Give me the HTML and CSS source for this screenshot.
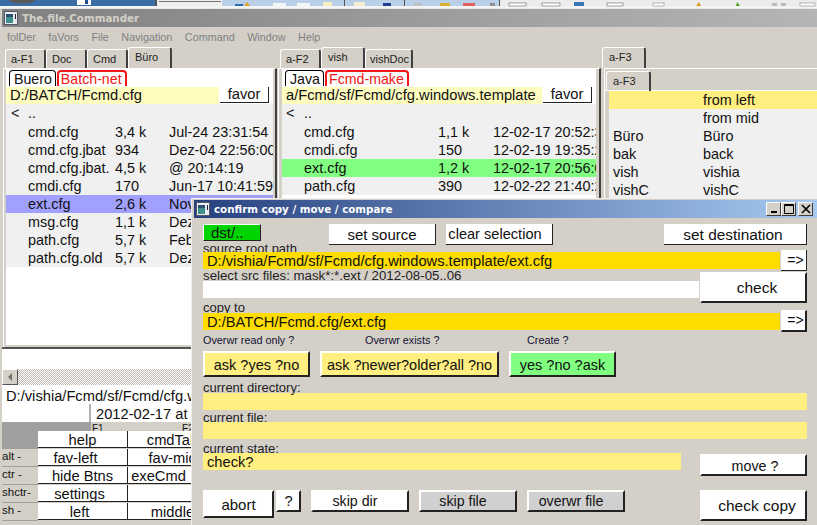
FILE: index.html
```html
<!DOCTYPE html>
<html lang="en">
<head>
    <meta charset="UTF-8">
    <title>The.file.Commander</title>
    <link rel="stylesheet" href="styles.css">
</head>
<body>
    <!-- what is left of the desktop toolbar above the window -->
    <svg class="desktop-strip" width="817" height="8" viewBox="0 0 817 8">
        <rect width="817" height="8" fill="#f4f4f4"/>
        <rect width="155" height="6" fill="#3a6ea5"/>
        <ellipse cx="22" cy="0" rx="13" ry="3.5" fill="#5a5a5a"/>
        <rect x="77" width="14" height="5" fill="#fff"/>
        <rect x="85" width="3" height="4" fill="#1f4f8f"/>
        <rect x="155" width="2" height="6" fill="#555"/>
        <rect x="157" width="65" height="6" fill="#eeeeee"/>
        <rect x="159" y="1" width="62" height="1" fill="#777"/>
        <rect x="222" width="278" height="6" fill="#b9d0e8"/>
        <rect x="235" y="4" width="8" height="2" fill="#2a6db0"/>
        <path d="M244 6l3-4 3 4z" fill="#e8a020"/>
        <rect x="273" y="3" width="13" height="3" fill="#f4f4f4"/>
        <rect x="297" y="3" width="13" height="3" fill="#f4f4f4"/>
        <rect x="323" y="2" width="9" height="4" fill="#f8f0c0"/>
        <rect x="344" width="1" height="6" fill="#555"/>
        <rect x="354" y="2" width="11" height="4" fill="#f4f0d0"/>
        <rect x="383" y="3" width="8" height="3" fill="#1f3f8f"/>
        <rect x="404" width="1" height="6" fill="#555"/>
        <rect x="414" y="3" width="8" height="3" fill="#c0c0c0"/>
        <rect x="440" y="3" width="10" height="3" fill="#d8b030"/>
        <rect x="463" y="3" width="12" height="3" fill="#e06060"/>
        <rect x="490" y="3" width="5" height="3" fill="#909090"/>
        <rect x="499" width="1" height="6" fill="#555"/>
        <rect x="500" width="317" height="6" fill="#ececec"/>
        <rect x="509" y="3" width="17" height="3" fill="#fff" stroke="#666" stroke-width="0.6"/>
        <rect x="542" y="3" width="18" height="3" fill="#fff" stroke="#666" stroke-width="0.6"/>
        <rect x="574" y="2" width="10" height="4" fill="#3a78b8"/>
        <rect x="607" y="3" width="16" height="3" fill="#fff" stroke="#666" stroke-width="0.6"/>
        <rect x="653" y="3" width="11" height="3" fill="#fff" stroke="#888" stroke-width="0.6"/>
        <path d="M696 6l3-4 2 4z" fill="#d0a020"/>
        <path d="M736 6l1-4 3 4z" fill="#50a030"/>
        <rect x="772" y="3" width="5" height="3" fill="#bbb"/>
        <rect x="781" y="3" width="5" height="3" fill="#bbb"/>
        <rect x="800" y="3" width="15" height="3" fill="#fff" stroke="#888" stroke-width="0.6"/>
    </svg>

    <div class="main-window">
        <div class="main-title">
            <svg class="app-icon" width="14" height="14" viewBox="0 0 14 14"><rect x="0.5" y="0.5" width="13" height="13" fill="#e8eef0" stroke="#556"/><rect x="2" y="3" width="7" height="9" fill="#3f8f8f"/><rect x="2" y="3" width="7" height="3" fill="#2a4f6f"/><rect x="11" y="3" width="1" height="5" fill="#223"/></svg>
            <span>The.file.Commander</span>
        </div>
        <div class="menu">
            <span>folDer</span><span>faVors</span><span>File</span><span>Navigation</span><span>Command</span><span>Window</span><span>Help</span>
        </div>

        <div class="panels">
            <div class="panel panel-left">
                <div class="tabs">
                    <span class="tab">a-F1</span><span class="tab">Doc</span><span class="tab">Cmd</span><span class="tab active">Büro</span>
                </div>
                <div class="tab-body">
                    <div class="subtabs"><span class="subtab">Buero</span><span class="subtab red">Batch-net</span></div>
                    <div class="pathline"><span class="path">D:/BATCH/Fcmd.cfg</span><span class="favor">favor</span></div>
                    <div class="filelist">
                        <div class="row"><span class="c0">&lt;</span><span class="c1">..</span></div>
                        <div class="row"><span class="c0"></span><span class="c1">cmd.cfg</span><span class="c2">3,4 k</span><span class="c3">Jul-24 23:31:54</span></div>
                        <div class="row"><span class="c0"></span><span class="c1">cmd.cfg.jbat</span><span class="c2">934</span><span class="c3">Dez-04 22:56:00</span></div>
                        <div class="row"><span class="c0"></span><span class="c1">cmd.cfg.jbat.</span><span class="c2">4,5 k</span><span class="c3">@ 20:14:19</span></div>
                        <div class="row"><span class="c0"></span><span class="c1">cmdi.cfg</span><span class="c2">170</span><span class="c3">Jun-17 10:41:59</span></div>
                        <div class="row sel-blue"><span class="c0"></span><span class="c1">ext.cfg</span><span class="c2">2,6 k</span><span class="c3">Nov</span></div>
                        <div class="row"><span class="c0"></span><span class="c1">msg.cfg</span><span class="c2">1,1 k</span><span class="c3">Dez</span></div>
                        <div class="row"><span class="c0"></span><span class="c1">path.cfg</span><span class="c2">5,7 k</span><span class="c3">Feb</span></div>
                        <div class="row"><span class="c0"></span><span class="c1">path.cfg.old</span><span class="c2">5,7 k</span><span class="c3">Dez</span></div>
                    </div>
                </div>
            </div>

            <div class="panel panel-mid">
                <div class="tabs">
                    <span class="tab">a-F2</span><span class="tab active">vish</span><span class="tab">vishDoc</span>
                </div>
                <div class="tab-body">
                    <div class="subtabs"><span class="subtab">Java</span><span class="subtab red">Fcmd-make</span></div>
                    <div class="pathline"><span class="path">a/Fcmd/sf/Fcmd/cfg.windows.template</span><span class="favor">favor</span></div>
                    <div class="filelist">
                        <div class="row"><span class="c0">&lt;</span><span class="c1">..</span></div>
                        <div class="row"><span class="c0"></span><span class="c1">cmd.cfg</span><span class="c2">1,1 k</span><span class="c3">12-02-17 20:52:30</span></div>
                        <div class="row"><span class="c0"></span><span class="c1">cmdi.cfg</span><span class="c2">150</span><span class="c3">12-02-19 19:35:20</span></div>
                        <div class="row sel-green"><span class="c0"></span><span class="c1">ext.cfg</span><span class="c2">1,2 k</span><span class="c3">12-02-17 20:56:00</span></div>
                        <div class="row"><span class="c0"></span><span class="c1">path.cfg</span><span class="c2">390</span><span class="c3">12-02-22 21:40:20</span></div>
                    </div>
                </div>
            </div>

            <div class="panel panel-right">
                <div class="tabs">
                    <span class="tab active">a-F3</span>
                </div>
                <div class="tab-body">
                    <div class="tabs inner-tabs"><span class="tab active">a-F3</span></div>
                    <div class="favlist">
                        <div class="favrow sel-yellow"><span class="f1"></span><span>from left</span></div>
                        <div class="favrow"><span class="f1"></span><span>from mid</span></div>
                        <div class="favrow"><span class="f1">Büro</span><span>Büro</span></div>
                        <div class="favrow"><span class="f1">bak</span><span>back</span></div>
                        <div class="favrow"><span class="f1">vish</span><span>vishia</span></div>
                        <div class="favrow"><span class="f1">vishC</span><span>vishC</span></div>
                    </div>
                </div>
            </div>
        </div>

        <div class="lower-left">
            <div class="blank-line"></div>
            <div class="scrollbar">
                <span class="scroll-btn"><svg width="6" height="8" viewBox="0 0 6 8"><path d="M5 0v8L1 4z" fill="#707070"/></svg></span>
            </div>
            <div class="cmdline">D:/vishia/Fcmd/sf/Fcmd/cfg.windows.template/ext.cfg</div>
            <div class="dateline"><span class="date-blank"></span><span class="date-text">2012-02-17 at 20:56:00</span></div>
            <div class="fnhead"><span class="fn-grey"></span><span class="fn-label">F1</span><span class="fn-label">F2</span></div>
            <div class="btn-grid">
                <span class="rowlabel grey"></span><span class="fbtn">help</span><span class="fbtn">cmdTab</span>
                <span class="rowlabel">alt -</span><span class="fbtn shift-big">fav-left</span><span class="fbtn">fav-mid</span>
                <span class="rowlabel">ctr -</span><span class="fbtn">hide Btns</span><span class="fbtn shift-exe">exeCmd</span>
                <span class="rowlabel">shctr-</span><span class="fbtn shift-small">settings</span><span class="fbtn"></span>
                <span class="rowlabel">sh -</span><span class="fbtn shift-small">left</span><span class="fbtn">middle</span>
            </div>
        </div>
    </div>

    <div class="dialog">
        <div class="dialog-title">
            <svg class="app-icon" width="14" height="14" viewBox="0 0 14 14"><rect x="0.5" y="0.5" width="13" height="13" fill="#e8eef0" stroke="#556"/><rect x="2" y="3" width="7" height="9" fill="#3f8f8f"/><rect x="2" y="3" width="7" height="3" fill="#2a4f6f"/><rect x="11" y="3" width="1" height="5" fill="#223"/></svg>
            <span class="dialog-name">confirm copy / move / compare</span>
            <span class="winbtn"><svg width="10" height="10" viewBox="0 0 10 10"><rect x="2" y="7" width="6" height="2" fill="#000"/></svg></span>
            <span class="winbtn"><svg width="10" height="10" viewBox="0 0 10 10"><path d="M0.5 0.5h9v9h-9z M0.5 1.5h9" fill="none" stroke="#000"/></svg></span>
            <span class="winbtn"><svg width="10" height="10" viewBox="0 0 10 10"><path d="M1 1l8 8M9 1l-8 8" stroke="#000" stroke-width="1.6"/></svg></span>
        </div>
        <div class="dialog-body">
            <div class="top-row">
                <span class="dst">dst/..</span>
                <span class="btn flat set-source">set source</span>
                <span class="btn flat clear-sel">clear selection</span>
                <span class="btn flat set-dest">set destination</span>
            </div>
            <div class="lbl source-lbl">source root path</div>
            <div class="field-row">
                <div class="gold">D:/vishia/Fcmd/sf/Fcmd/cfg.windows.template/ext.cfg</div>
                <span class="btn flat arrow">=&gt;</span>
            </div>
            <div class="select-block">
                <div class="select-left">
                    <div class="lbl select-lbl">select src files: mask*:*.ext / 2012-08-05..06</div>
                    <div class="white-field"></div>
                </div>
                <span class="btn check">check</span>
            </div>
            <div class="lbl copy-lbl">copy to</div>
            <div class="field-row">
                <div class="gold gold-low">D:/BATCH/Fcmd.cfg/ext.cfg</div>
                <span class="btn arrow arrow-low">=&gt;</span>
            </div>
            <div class="ask-labels">
                <span class="one">Overwr read only ?</span>
                <span class="two">Overwr exists ?</span>
                <span>Create ?</span>
            </div>
            <div class="ask-row">
                <span class="btn ask yellow ask1">ask ?yes ?no</span>
                <span class="btn ask yellow ask2">ask ?newer?older?all ?no</span>
                <span class="btn ask green">yes ?no ?ask</span>
            </div>
            <div class="lbl dir-lbl">current directory:</div>
            <div class="pale"></div>
            <div class="lbl file-lbl">current file:</div>
            <div class="pale"></div>
            <div class="lbl state-lbl">current state:</div>
            <div class="state-row">
                <div class="pale state">check?</div>
                <span class="btn move">move ?</span>
            </div>
            <div class="bottom-row">
                <span class="btn abort">abort</span>
                <span class="btn q">?</span>
                <span class="btn skip">skip dir</span>
                <span class="btn skip grey">skip file</span>
                <span class="btn skip grey">overwr file</span>
                <span class="btn check-copy">check copy</span>
            </div>
        </div>
    </div>
</body>
</html>
```

FILE: styles.css
```css
html, body {
    margin: 0;
    padding: 0;
}

body {
    width: 817px;
    height: 525px;
    overflow: hidden;
    position: relative;
    background: #d4d0c8;
    font-family: "Liberation Sans", Arial, sans-serif;
    color: #101010;
}

.desktop-strip {
    display: block;
}

.main-window {
    height: 517px;
    border-top: 1px solid #e8e8e8;
    box-sizing: border-box;
    padding-left: 2px;
    background: #d4d0c8;
}

.main-title {
    height: 18px;
    background: linear-gradient(to right, #808080, #b5b5b5);
    color: #d4d0c8;
    font: bold 10.3px "DejaVu Sans", sans-serif;
    display: flex;
    align-items: center;
    gap: 4px;
    padding-left: 2px;
}

.app-icon { flex: none; }

.menu {
    height: 20px;
    display: flex;
    align-items: center;
    gap: 12.5px;
    padding-left: 5px;
    font-size: 10.8px;
    color: #808080;
}

.panels {
    display: flex;
    height: 300px;
}

.panel { flex: none; height: 300px; }
.panel-left { width: 275px; padding-left: 3px; box-sizing: border-box; }
.panel-mid { width: 324px; padding-left: 3px; box-sizing: border-box; }
.panel-right { flex: 1; padding-left: 1px; box-sizing: border-box; }

.tabs {
    display: flex;
    height: 21px;
    align-items: flex-end;
}

.tab {
    height: 19px;
    width: 41px;
    padding-left: 5px;
    box-sizing: border-box;
    font-size: 11px;
    line-height: 18px;
    border-top: 1px solid #fff;
    border-left: 1px solid #fff;
    border-right: 2px solid #404040;
    border-top-left-radius: 3px;
    border-top-right-radius: 3px;
    color: #222;
    white-space: nowrap;
    flex: none;
}

.tab.active {
    height: 21px;
    width: 44px;
    padding-left: 6px;
}

.panel-mid .tab:last-child { width: 48px; padding-left: 4px; }

.tab-body {
    height: 279px;
    box-sizing: border-box;
    display: flex;
    flex-direction: column;
    background: #d4d0c8;
    border-top: 1px solid #fff;
    border-left: 1px solid #fff;
    border-right: 2px solid #404040;
    margin-left: -2px;
}

.panel-left .tab-body { width: 274px; padding: 0 2px 2px; }
.panel-mid .tab-body { width: 323px; padding: 0 3px 2px; }

.subtabs {
    display: flex;
    height: 18px;
    padding-left: 3px;
    font-size: 14.2px;
    box-sizing: border-box;
    background: #fff;
    flex: none;
}

.subtab {
    height: 16px;
    margin-top: 1px;
    border: 1px solid #000;
    border-bottom: none;
    border-radius: 4px 4px 0 0;
    padding: 0 3px 0 4px;
    margin-right: 1px;
    line-height: 16px;
    box-sizing: border-box;
}

.subtab.red {
    color: #f01818;
    border: 2px solid #f01818;
    border-bottom: none;
    padding: 0 3px 0 2px;
    line-height: 15px;
}

.pathline {
    display: flex;
    height: 17px;
    background: #fff;
    font-size: 14.7px;
    line-height: 17px;
    padding-right: 4px;
    flex: none;
}

.path {
    flex: 1;
    padding-left: 4px;
    white-space: nowrap;
    overflow: hidden;
    background: #fffcc0;
}

.favor {
    flex: none;
    width: 49px;
    height: 16px;
    margin-left: 1px;
    line-height: 15px;
    box-sizing: border-box;
    background: #fff;
    border-right: 1px solid #222;
    border-bottom: 1px solid #222;
    text-align: center;
}

.filelist {
    flex: 1;
    background: #fff;
    overflow: hidden;
}

.row {
    display: flex;
    height: 18px;
    line-height: 18px;
    font-size: 14.4px;
    white-space: nowrap;
    overflow: hidden;
    background: #f0f0f0;
}

.filelist .row:first-child { height: 19px; }

.c0 { width: 22px; flex: none; padding-left: 5px; box-sizing: border-box; }
.c1 { width: 87px; flex: none; }
.c2 { width: 54px; flex: none; }
.c3 { flex: 1; overflow: hidden; }

.panel-mid .c1 { width: 134px; }
.panel-mid .c2 { width: 55px; }
.panel-mid .c0 { padding-left: 4px; }

.sel-blue { background: #a0a0ff; }
.sel-green { background: #80ff80; }
.sel-yellow { background: #ffee80; }

.panel-right .tab-body {
    margin-left: 2px;
    border-right: none;
    padding-top: 1px;
}

.inner-tabs {
    flex: none;
    height: 21px;
    border-bottom: 1px solid #fff;
    padding-left: 1px;
    box-sizing: border-box;
}

.inner-tabs .tab.active {
    height: 20px;
    width: 45px;
    margin-bottom: -1px;
    line-height: 18px;
}

.favlist {
    background: #f0f0f0;
    margin-left: 4px;
    flex: 1;
}

.favrow {
    display: flex;
    height: 18px;
    line-height: 18px;
    font-size: 14.4px;
}

.f1 { width: 90px; padding-left: 4px; flex: none; }

/* below the file panels */
.lower-left {
    width: 189px;
    overflow: hidden;
    background: #d4d0c8;
}

.blank-line {
    height: 20px;
    background: #fff;
    border-top: 2px solid #555;
}

.scrollbar {
    height: 16px;
    background: repeating-conic-gradient(#fff 0 25%, #c0bcb4 0 50%) 0 0 / 2px 2px;
}

.scroll-btn {
    display: flex;
    align-items: center;
    justify-content: center;
    width: 16px;
    height: 16px;
    background: #d4d0c8;
    border-top: 1px solid #fff;
    border-left: 1px solid #fff;
    border-right: 1px solid #555;
    border-bottom: 1px solid #555;
    box-sizing: border-box;
}

.cmdline {
    height: 19px;
    line-height: 22px;
    background: #fff;
    font-size: 14.7px;
    padding-left: 4px;
    white-space: nowrap;
    overflow: hidden;
}

.dateline {
    display: flex;
    height: 18px;
    line-height: 20px;
    font-size: 14.7px;
    white-space: nowrap;
    overflow: hidden;
}

.date-blank { width: 87px; flex: none; background: #fff; border-right: 2px solid #b0b0b0; }
.date-text { background: #fff; padding-left: 5px; flex: 1; }

.fnhead {
    display: flex;
    height: 9px;
    padding-top: 0;
    font-size: 10px;
    line-height: 14px;
    overflow: hidden;
}

.fn-grey { width: 89px; flex: none; background: #a0a0a0; }
.fn-label { width: 90px; flex: none; padding-left: 1px; box-sizing: border-box; }

.btn-grid {
    display: grid;
    grid-template-columns: 36px 90px 90px;
    grid-auto-rows: 18px;
}

.rowlabel {
    font-size: 11.5px;
    line-height: 15px;
    border-bottom: 1px solid #a0a0a0;
    box-sizing: border-box;
}

.rowlabel.grey { background: #a0a0a0; border-bottom: none; }

.fbtn {
    background: #fff;
    border-right: 1px solid #222;
    border-bottom: 1px solid #222;
    margin-bottom: 1px;
    box-sizing: border-box;
    text-align: center;
    font-size: 14.7px;
    line-height: 19px;
    white-space: nowrap;
    overflow: hidden;
}

.shift-big { padding-right: 14px; }
.shift-small { padding-right: 6px; }
.shift-exe { padding-right: 28px; }

/* dialog on top of the main window */
.dialog {
    position: absolute;
    left: 191px;
    top: 198px;
    width: 626px;
    height: 327px;
    background: #d4d0c8;
    border-top: 1px solid #eee;
    border-left: 1px solid #eee;
    box-sizing: border-box;
    padding-left: 2px;
    padding-top: 1px;
}

.dialog-title {
    height: 18px;
    background: linear-gradient(to right, #27417f, #a6caf0);
    color: #fff;
    font: bold 10.3px "DejaVu Sans", sans-serif;
    display: flex;
    align-items: center;
    gap: 4px;
    padding-left: 2px;
    padding-right: 4px;
}

.dialog-name { flex: 1; }

.winbtn {
    width: 15px;
    height: 14px;
    background: #d4d0c8;
    border-top: 1px solid #fff;
    border-left: 1px solid #fff;
    border-right: 1px solid #404040;
    border-bottom: 1px solid #404040;
    box-sizing: border-box;
    display: flex;
    align-items: center;
    justify-content: center;
    margin-left: -4px;
    flex: none;
}

.winbtn:last-child { margin-left: -2px; }

.dialog-body {
    padding: 6px 10px 0 9px;
    font-size: 14.7px;
}

.btn {
    background: #fff;
    border-top: 2px solid #fff;
    border-left: 2px solid #fff;
    border-right: 2px solid #222;
    border-bottom: 2px solid #222;
    box-sizing: border-box;
    text-align: center;
    white-space: nowrap;
    display: block;
    flex: none;
}

.btn.flat {
    border-width: 0 1px 1px 0;
}

.top-row {
    display: flex;
    height: 21px;
}

.dst {
    width: 58px;
    height: 17px;
    line-height: 16px;
    font-size: 15px;
    background: #00d400;
    border-top: 1px solid #fff;
    border-left: 1px solid #fff;
    border-bottom: 1px solid #222;
    border-right: 1px solid #222;
    box-sizing: border-box;
    padding-left: 7px;
}

.set-source, .clear-sel, .set-dest {
    height: 21px;
    line-height: 21px;
    font-size: 15px;
}

.set-source { width: 107px; margin-left: 68px; }
.clear-sel { width: 107px; margin-left: 10px; padding-right: 8px; font-size: 14.6px; }
.set-dest { width: 143px; margin-left: 111px; padding-right: 4px; font-size: 15.4px; }

.lbl {
    font-size: 13px;
    color: #222;
    white-space: nowrap;
}

.source-lbl { height: 5px; line-height: 8px; }

.field-row {
    display: flex;
    align-items: flex-start;
}

.gold {
    width: 577px;
    flex: none;
    height: 17px;
    margin-top: 2px;
    background: #ffdd00;
    line-height: 19px;
    padding-left: 4px;
    box-sizing: border-box;
    white-space: nowrap;
}

.gold-low { margin-top: 3px; line-height: 18px; }

.arrow {
    width: 26px;
    margin-left: 1px;
    height: 21px;
    line-height: 21px;
    font-size: 14px;
    padding-left: 4px;
}

.arrow-low { height: 22px; line-height: 19px; border-top-width: 1px; border-left-width: 1px; }

.select-block {
    display: flex;
    height: 31px;
    margin-top: 1px;
}

.select-left { width: 496px; flex: none; }
.select-lbl { height: 9px; line-height: 8px; font-size: 13.25px; }
.white-field { height: 17px; background: #fff; }

.check {
    width: 107px;
    height: 31px;
    line-height: 28px;
    font-size: 15.5px;
    margin-left: 1px;
    padding-left: 7px;
}

.copy-lbl { height: 7px; line-height: 10px; }

.ask-labels {
    height: 19px;
    font-size: 10.8px;
    line-height: 16px;
    color: #113;
    display: flex;
    white-space: nowrap;
}

.ask-labels .one { width: 162px; }
.ask-labels .two { width: 162px; }

.ask-row {
    display: flex;
    height: 26px;
}

.ask { height: 26px; line-height: 24px; font-size: 14.5px; }
.yellow { background: #ffee80; }
.green { background: #80ff80; width: 107px; margin-left: 10px; }
.ask1 { width: 107px; }
.ask2 { width: 179px; margin-left: 10px; }

.dir-lbl { height: 16px; line-height: 22px; }
.file-lbl { height: 12px; line-height: 16px; }
.state-lbl { height: 14px; line-height: 20px; }

.pale {
    height: 17px;
    background: #ffee80;
}

.state-row {
    display: flex;
    align-items: flex-start;
    height: 23px;
}

.pale.state {
    width: 478px;
    padding-left: 4px;
    box-sizing: border-box;
    line-height: 19px;
    flex: none;
}

.move {
    width: 107px;
    height: 22px;
    line-height: 21px;
    font-size: 14.3px;
    margin-left: 19px;
    margin-top: 1px;
    padding-left: 3px;
}

.bottom-row {
    display: flex;
    align-items: flex-start;
    margin-top: 14px;
}

.abort { width: 71px; height: 28px; line-height: 25px; font-size: 15px; }
.q { width: 25px; height: 22px; line-height: 18px; margin-left: 2px; }
.skip { width: 98px; height: 22px; line-height: 18px; margin-left: 10px; padding-right: 10px; font-size: 14.2px; }
.grey { background: #d0d0d0; }

.check-copy {
    width: 107px;
    height: 31px;
    line-height: 28px;
    font-size: 15.5px;
    margin-left: 75px;
    padding-left: 7px;
}
```
